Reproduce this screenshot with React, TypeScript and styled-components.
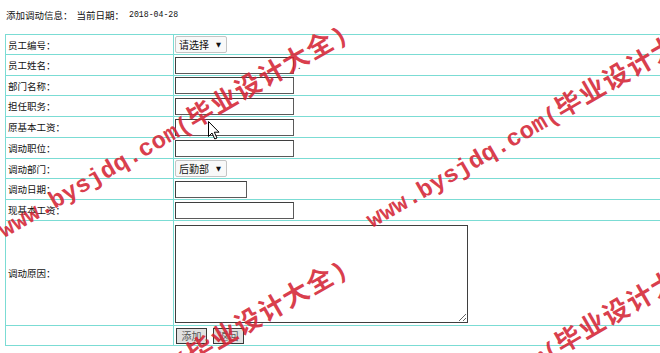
import React from "react";
import styled, { createGlobalStyle } from "styled-components";

const GlobalStyle = createGlobalStyle`
  html, body {
    margin: 0;
    padding: 0;
    overflow: hidden;
    background: #ffffff;
  }
  body {
    font-family: "Noto Sans CJK SC", "Noto Sans", sans-serif;
    font-size: 9.5px;
    color: #111;
  }
`;

const LINE = "#7bdcd4";

const Page = styled.div`
  position: relative;
  width: 660px;
  height: 353px;
  overflow: hidden;
  padding-left: 5px;
  box-sizing: border-box;
`;

const Title = styled.div`
  height: 34px;
  padding-bottom: 4px;
  box-sizing: border-box;
  display: flex;
  align-items: center;
  gap: 4px;
  padding-left: 1px;
  line-height: 12px;
`;

const DateText = styled.span`
  font-family: "Liberation Mono", monospace;
  font-size: 8.2px;
  margin-left: 1px;
`;

const Table = styled.div`
  width: 760px;
  border-top: 1px solid ${LINE};
  border-left: 1px solid ${LINE};
  display: flex;
  flex-direction: column;
`;

const Row = styled.div<{ $h: number }>`
  display: flex;
  height: ${(p) => p.$h}px;
  box-sizing: border-box;
  border-bottom: 1px solid ${LINE};
`;

const Label = styled.div`
  width: 168px;
  flex: none;
  box-sizing: border-box;
  border-right: 1px solid ${LINE};
  display: flex;
  align-items: center;
  padding-left: 2px;
  line-height: 12px;
`;

const Field = styled.div`
  flex: 1;
  display: flex;
  align-items: center;
  gap: 5px;
  padding-left: 1px;
`;

const SelectWrap = styled.span`
  position: relative;
  display: inline-block;
`;

const Select = styled.select`
  appearance: none;
  -webkit-appearance: none;
  width: 52px;
  height: 17px;
  box-sizing: border-box;
  border: 1px solid #c4c4c4;
  border-radius: 2px;
  background: #f9f9f9;
  padding: 0 0 0 3px;
  margin: 0;
  font-family: "Noto Sans CJK SC", sans-serif;
  font-size: 10px;
  color: #111;
`;

const Arrow = styled.span`
  position: absolute;
  right: 6px;
  top: 50%;
  transform: translateY(-50%);
  font-size: 6.5px;
  color: #111;
  pointer-events: none;
  font-family: "DejaVu Sans", sans-serif;
`;

const TextInput = styled.input<{ $w: number }>`
  width: ${(p) => p.$w}px;
  height: 17px;
  box-sizing: border-box;
  border: 1px solid #3f3f3f;
  border-bottom-color: #5a5a5a;
  border-right-color: #5a5a5a;
  padding: 0 2px;
  margin: 0;
  background: #fff;
  font-size: 9.5px;
`;

const Mark = styled.span`
  font-size: 9px;
  color: #444;
  margin-left: -1px;
`;

const Reason = styled.textarea`
  width: 293px;
  height: 98px;
  box-sizing: border-box;
  border: 1px solid #3f3f3f;
  margin: 2px 0 0 0;
  padding: 2px;
  resize: both;
  background: #fff;
`;

const Button = styled.button`
  width: 31px;
  height: 16px;
  box-sizing: border-box;
  border: 1px solid #3a3a3a;
  background: #e1e1e1;
  color: #555;
  font-family: "Noto Sans CJK SC", sans-serif;
  font-size: 10px;
  line-height: 12px;
  padding: 0;
  margin: 1px 0 0 1px;
`;

const Watermark = styled.div<{ $x: number; $y: number }>`
  position: absolute;
  left: ${(p) => p.$x}px;
  top: ${(p) => p.$y - 27}px;
  height: 27px;
  line-height: 27px;
  transform-origin: 0 100%;
  transform: rotate(-30deg);
  white-space: nowrap;
  color: rgba(212, 36, 52, 0.88);
  font-weight: bold;
  pointer-events: none;
  z-index: 5;
`;

const WmLatin = styled.span`
  font-family: "Liberation Mono", monospace;
  font-size: 24px;
  letter-spacing: 0.2px;
`;

const WmCjk = styled.span`
  font-family: "Noto Sans CJK SC", sans-serif;
  font-size: 26px;
  letter-spacing: 1.5px;
`;

const Cursor = styled.svg`
  position: absolute;
  left: 208px;
  top: 121px;
  z-index: 6;
  pointer-events: none;
`;

const watermarks = [
  { x: 5, y: 240 },
  { x: 373, y: 230 },
  { x: 5, y: 475 },
  { x: 373, y: 465 },
];

const textRows: { label: string; h: number; w: number; mark?: boolean }[] = [
  { label: "员工姓名：", h: 21, w: 119, mark: true },
  { label: "部门名称：", h: 20, w: 119 },
  { label: "担任职务：", h: 21, w: 119 },
  { label: "原基本工资：", h: 21, w: 119 },
  { label: "调动职位：", h: 21, w: 119 },
];

export default function App() {
  return (
    <>
      <GlobalStyle />
      <Page>
        <Title>
          <span>添加调动信息：</span>
          <span>当前日期：</span>
          <DateText>2018-04-28</DateText>
        </Title>
        <Table>
          <Row $h={20}>
            <Label>员工编号：</Label>
            <Field>
              <SelectWrap>
                <Select defaultValue="0">
                  <option value="0">请选择</option>
                </Select>
                <Arrow>▼</Arrow>
              </SelectWrap>
            </Field>
          </Row>
          {textRows.map((r) => (
            <Row $h={r.h} key={r.label}>
              <Label>{r.label}</Label>
              <Field>
                <TextInput $w={r.w} />
                {r.mark && <Mark>.</Mark>}
              </Field>
            </Row>
          ))}
          <Row $h={20}>
            <Label>调动部门：</Label>
            <Field>
              <SelectWrap>
                <Select defaultValue="1">
                  <option value="1">后勤部</option>
                </Select>
                <Arrow>▼</Arrow>
              </SelectWrap>
            </Field>
          </Row>
          <Row $h={21}>
            <Label>调动日期：</Label>
            <Field>
              <TextInput $w={72} />
            </Field>
          </Row>
          <Row $h={21}>
            <Label>现基本工资：</Label>
            <Field>
              <TextInput $w={119} />
            </Field>
          </Row>
          <Row $h={105}>
            <Label>调动原因：</Label>
            <Field>
              <Reason />
            </Field>
          </Row>
          <Row $h={20}>
            <Label />
            <Field>
              <Button>添加</Button>
              <Button>返回</Button>
            </Field>
          </Row>
        </Table>
        {watermarks.map((w, i) => (
          <Watermark $x={w.x} $y={w.y} key={i}>
            <WmLatin>www.bysjdq.com(</WmLatin>
            <WmCjk>毕业设计大全</WmCjk>
            <WmLatin>)</WmLatin>
          </Watermark>
        ))}
        <Cursor width="13" height="19" viewBox="0 0 13 19">
          <path
            d="M0.5 0.5 L0.5 15.5 L4 12 L6.8 18 L9 17 L6.3 11.2 L11 11.2 Z"
            fill="#fff"
            stroke="#000"
            strokeWidth="1"
            strokeLinejoin="round"
          />
        </Cursor>
      </Page>
    </>
  );
}
